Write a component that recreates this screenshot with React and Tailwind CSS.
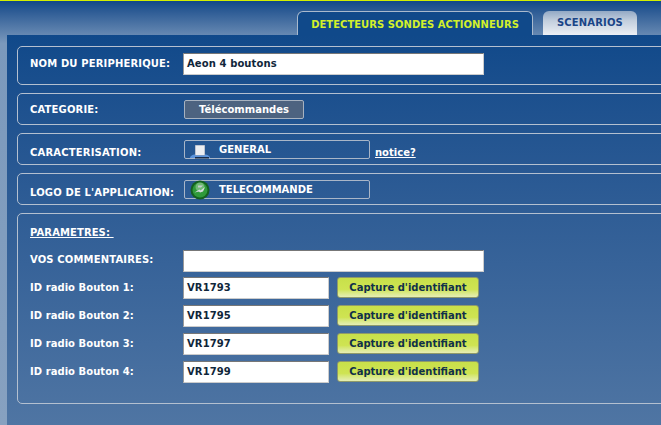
const font = { fontFamily: '"DejaVu Sans", Verdana, sans-serif' }

function Monitor() {
  return (
    <svg width="20" height="18" viewBox="0 0 20 18" className="shrink-0">
      <path d="M0 17c0-2 3-3.500 5-3.500h10c2 0 5 1.500 5 3.500z" fill="#5b93dc" />
      <rect x="5" y="16" width="14" height="1.500" fill="#172c4c" />
      <rect x="5" y="4" width="10" height="10.500" fill="#8f9bb0" />
      <rect x="5.500" y="4.500" width="9" height="9.500" fill="#eceef2" />
    </svg>
  )
}

function Globe() {
  return (
    <svg width="20" height="20" viewBox="0 0 20 20" className="shrink-0">
      <circle cx="10" cy="10" r="9.500" fill="#14601f" />
      <circle cx="10" cy="10" r="7.500" fill="#2f9a3a" />
      <circle cx="10" cy="7" r="4.500" fill="#8fc890" opacity="0.7" />
      <path d="M4.500 12.500l5-3 1 1 4.500-3.500-2 4.500-3 1-1-1z" fill="#d8dde0" />
      <path d="M8 5.500h5l-2 2H8z" fill="#c4cdd0" />
    </svg>
  )
}

function Box({ children, className }) {
  return (
    <div className={`border border-[#b4c0d0] rounded-[5px] -mr-[12px] pl-[12px] ${className}`}>
      {children}
    </div>
  )
}

function Field({ value, className }) {
  return (
    <div className={`h-[22px] bg-white border-t border-l border-t-[#777] border-l-[#999] border-r border-b border-r-[#ccc] border-b-[#ccc] pl-[3px] text-[10px] font-bold leading-[20px] tracking-[0.1px] text-[#10263a] ${className}`}>
      {value}
    </div>
  )
}

function Picker({ icon, label }) {
  return (
    <div className="w-[186px] h-[19px] border border-[#a9b6c8] rounded-[2px] flex items-center">
      <div className="w-[30px] pl-[5px] flex items-center h-full -mb-[1px]">{icon}</div>
      <span className="ml-[4px] -mt-[1px] text-[10px] font-bold text-white">{label}</span>
    </div>
  )
}

function RadioRow({ n, value }) {
  return (
    <div className="flex items-start h-[28px]">
      <div className="w-[153px] text-[10px] font-bold text-white leading-[22px] tracking-[0.05px]">ID radio Bouton {n}:</div>
      <Field value={value} className="w-[146px]" />
      <button className="ml-[8px] w-[142px] h-[21px] rounded-[3px] border border-[#8f9a6a] bg-gradient-to-b from-[#c8e04a] via-[#cfe452] via-[60%] to-[#e6eeb4] text-[10px] font-bold text-[#10304a]">
        Capture d'identifiant
      </button>
    </div>
  )
}

export default function App() {
  return (
    <div style={font} className="relative w-[661px] h-[425px] overflow-hidden bg-gradient-to-b from-[#104888] via-[#7b99bc] via-[10%] to-[#87a1c0] border-t border-t-[#d4ee00]">
      <div className="flex items-end h-[34px] pl-[297px] gap-[10px]">
        <div className="w-[236px] h-[24px] bg-[#10498a] border border-b-0 border-[#a9b9cd] rounded-t-[6px] text-center text-[10px] font-bold text-[#d2f02a] leading-[25px] tracking-[0.03px]">
          DETECTEURS SONDES ACTIONNEURS
        </div>
        <div className="w-[94px] h-[24px] rounded-t-[6px] bg-gradient-to-b from-[#93a9c5] via-[#c2cedd] via-[40%] to-[#eceff4] text-center text-[10px] font-bold text-[#1a4487] leading-[24px] tracking-[0.15px]">
          SCENARIOS
        </div>
      </div>
      <div className="ml-[7px] h-[390px] pl-[10px] pr-0 pt-[11px] bg-gradient-to-b from-[#10498a] to-[#4f75a3] flex flex-col gap-[8px]">
        <Box className="h-[39px] flex items-start pt-[6px]">
          <div className="w-[153px] text-[10px] font-bold text-white leading-[22px] tracking-[0.15px]">NOM DU PERIPHERIQUE:</div>
          <Field value="Aeon 4 boutons" className="w-[301px]" />
        </Box>
        <Box className="h-[32px] flex items-start pt-[6px]">
          <div className="w-[154px] text-[10px] font-bold text-white leading-[20px] tracking-[0.15px]">CATEGORIE:</div>
          <div className="w-[120px] h-[19px] bg-[#4d6380] border border-[#a7b2c0] rounded-[2px] text-center text-[10px] font-bold text-white leading-[18px]">Télécommandes</div>
        </Box>
        <Box className="h-[32px] flex items-start pt-[6px]">
          <div className="w-[154px] text-[10px] font-bold text-white leading-[26px] tracking-[0.18px]">CARACTERISATION:</div>
          <Picker icon={<Monitor />} label="GENERAL" />
          <a className="ml-[5px] mt-[5px] text-[10px] font-bold text-white underline leading-[16px]">notice?</a>
        </Box>
        <Box className="h-[32px] flex items-start pt-[6px]">
          <div className="w-[154px] text-[10px] font-bold text-white leading-[26px] tracking-[0.15px]">LOGO DE L'APPLICATION:</div>
          <Picker icon={<Globe />} label="TELECOMMANDE" />
        </Box>
        <Box className="h-[191px] pt-[11px]">
          <div className="h-[25px] text-[10px] font-bold text-white underline leading-[16px] tracking-[0.1px]">PARAMETRES:&nbsp;</div>
          <div className="flex items-start h-[27px]">
            <div className="w-[153px] text-[10px] font-bold text-white leading-[20px] tracking-[0.15px]">VOS COMMENTAIRES:</div>
            <Field value="" className="w-[301px]" />
          </div>
          <RadioRow n={1} value="VR1793" />
          <RadioRow n={2} value="VR1795" />
          <RadioRow n={3} value="VR1797" />
          <RadioRow n={4} value="VR1799" />
        </Box>
      </div>
    </div>
  )
}
